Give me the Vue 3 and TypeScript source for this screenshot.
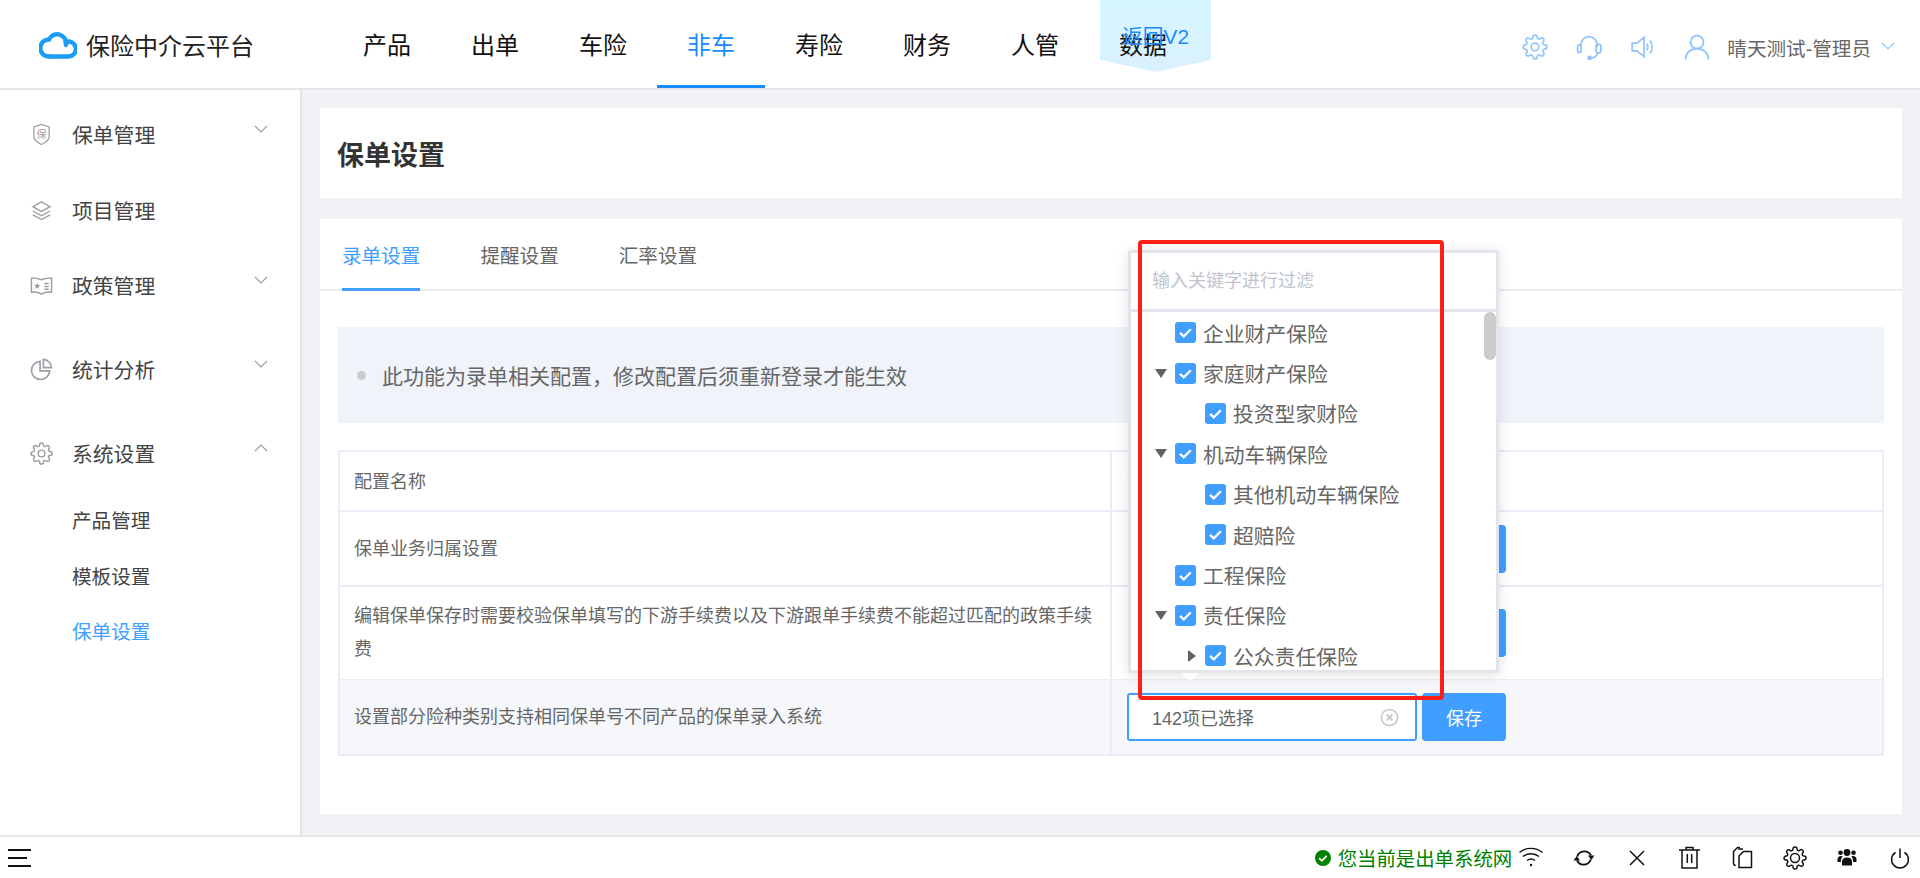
<script setup lang="ts">
interface TreeNode {
  label: string
  level: number
  arrow?: 'open' | 'closed'
}

const navItems = ['产品', '出单', '车险', '非车', '寿险', '财务', '人管', '数据']
const tabs = ['录单设置', '提醒设置', '汇率设置']
const subMenu = ['产品管理', '模板设置', '保单设置']

const treeNodes: TreeNode[] = [
  { label: '企业财产保险', level: 0 },
  { label: '家庭财产保险', level: 0, arrow: 'open' },
  { label: '投资型家财险', level: 1 },
  { label: '机动车辆保险', level: 0, arrow: 'open' },
  { label: '其他机动车辆保险', level: 1 },
  { label: '超赔险', level: 1 },
  { label: '工程保险', level: 0 },
  { label: '责任保险', level: 0, arrow: 'open' },
  { label: '公众责任保险', level: 1, arrow: 'closed' },
]

const gear =
  'M19.4 15a1.65 1.65 0 0 0 .33 1.82l.06.06a2 2 0 0 1 0 2.83 2 2 0 0 1-2.83 0l-.06-.06a1.65 1.65 0 0 0-1.82-.33 1.65 1.65 0 0 0-1 1.51V21a2 2 0 0 1-2 2 2 2 0 0 1-2-2v-.09A1.65 1.65 0 0 0 9 19.4a1.65 1.65 0 0 0-1.82.33l-.06.06a2 2 0 0 1-2.83 0 2 2 0 0 1 0-2.83l.06-.06a1.65 1.65 0 0 0 .33-1.82 1.65 1.65 0 0 0-1.51-1H3a2 2 0 0 1-2-2 2 2 0 0 1 2-2h.09A1.65 1.65 0 0 0 4.6 9a1.65 1.65 0 0 0-.33-1.82l-.06-.06a2 2 0 0 1 0-2.83 2 2 0 0 1 2.83 0l.06.06a1.65 1.65 0 0 0 1.82.33H9a1.65 1.65 0 0 0 1-1.51V3a2 2 0 0 1 2-2 2 2 0 0 1 2 2v.09a1.65 1.65 0 0 0 1 1.51 1.65 1.65 0 0 0 1.82-.33l.06-.06a2 2 0 0 1 2.83 0 2 2 0 0 1 0 2.83l-.06.06a1.65 1.65 0 0 0-.33 1.82V9a1.65 1.65 0 0 0 1.51 1H21a2 2 0 0 1 2 2 2 2 0 0 1-2 2h-.09a1.65 1.65 0 0 0-1.51 1z'
</script>

<template>
  <div class="page">
    <header class="topbar">
      <div class="logo">
        <svg class="cloud" viewBox="0 0 38 30" fill="none" stroke="#1a9cf7" stroke-width="4.4" stroke-linecap="round">
          <path d="M9.5 27.5H29.5a7.5 7.5 0 1 0-3-14.4" />
          <path d="M27 16A9 9 0 0 0 10 10.5A8.5 8.5 0 0 0 9.5 27.5" />
        </svg>
        <span>保险中介云平台</span>
      </div>
      <nav class="nav">
        <a v-for="item in navItems" :key="item" class="nav-item" :class="{ active: item === '非车' }">{{ item }}</a>
      </nav>
      <div class="top-right">
        <svg class="top-icon" viewBox="0 0 24 24" fill="none" stroke="#8fc4ff" stroke-width="1.5">
          <circle cx="12" cy="12" r="3.6" /><path :d="gear" />
        </svg>
        <svg class="top-icon" viewBox="0 0 24 24" fill="none" stroke="#8fc4ff" stroke-width="1.6">
          <path d="M4.5 12V10a7.5 7.5 0 0 1 15 0v2" />
          <rect x="1.5" y="10" width="3.2" height="7" rx="1.6" />
          <rect x="18.5" y="9.5" width="4.5" height="8" rx="2" />
          <path d="M20 17.5c-.5 2.8-3 4.5-6 4.8" />
          <circle cx="12.5" cy="22" r="1.4" fill="#8fc4ff" />
        </svg>
        <svg class="top-icon" viewBox="0 0 24 24" fill="none" stroke="#8fc4ff" stroke-width="1.6">
          <path d="M2 8.5h4.5L13 3v18l-6.500-5.500H2z" />
          <path d="M15.500 9c1.200 1.900 1.200 4.100 0 6M18.500 6c2.600 3.600 2.600 8.400 0 12" />
        </svg>
        <div class="user">
          <svg class="top-icon" viewBox="0 0 24 24" fill="none" stroke="#8fc4ff" stroke-width="1.7">
            <circle cx="12" cy="7.5" r="6" />
            <path d="M1.5 23.5c0-6 4.5-10 10.5-10s10.5 4 10.5 10" />
          </svg>
          <span class="user-name">晴天测试-管理员</span>
          <svg class="user-caret" viewBox="0 0 14 8" fill="none" stroke="#8fc4ff" stroke-width="1.2">
            <path d="M1 1l6 6 6-6" />
          </svg>
        </div>
      </div>
    </header>

    <!-- 悬浮的返回入口：底色压在导航下面，文字在导航上面 -->
    <div class="back-v2">
      <i class="back-bg"></i>
      <span class="back-text">返回V2</span>
    </div>

    <main class="main">
      <aside class="sidebar">
        <div class="menu-row">
          <svg class="menu-icon" viewBox="0 0 24 24" fill="none" stroke="#9a9da3" stroke-width="1.3">
            <path d="M12 1.5l8 2.5v10c0 4-4 6.5-8 8.5-4-2-8-4.500-8-8.500V4z" />
            <text x="12" y="15.5" font-size="10.5" text-anchor="middle" fill="#9a9da3" stroke="none">保</text>
          </svg>
          <span class="menu-label">保单管理</span>
          <svg class="menu-caret" viewBox="0 0 14 8" fill="none" stroke="#9a9da3" stroke-width="1.1"><path d="M1 1l6 6 6-6" /></svg>
        </div>
        <div class="menu-row">
          <svg class="menu-icon" viewBox="0 0 24 24" fill="none" stroke="#9a9da3" stroke-width="1.4">
            <path d="M12 3l9 5-9 5-9-5z" /><path d="M3 12.5l9 5 9-5" /><path d="M3 16.5l9 5 9-5" />
          </svg>
          <span class="menu-label">项目管理</span>
        </div>
        <div class="menu-row">
          <svg class="menu-icon" viewBox="0 0 24 24" fill="none" stroke="#9a9da3" stroke-width="1.5">
            <path d="M1.5 4.5c4-.5 7.5 0 10.5 1.500 3-1.500 6.500-2 10.500-1.500v14.500c-4-.5-7.500 0-10.500 2-3-2-6.500-2.500-10.500-2z" />
            <path d="M15 10h4.5M15 13h4.5M15 16h4.5" />
            <path d="M7.5 9l1 2.5h2.5l-2 1.600.7 2.600-2.200-1.500-2.200 1.500.7-2.600-2-1.600h2.500z" fill="#9a9da3" stroke="none" />
          </svg>
          <span class="menu-label">政策管理</span>
          <svg class="menu-caret" viewBox="0 0 14 8" fill="none" stroke="#9a9da3" stroke-width="1.1"><path d="M1 1l6 6 6-6" /></svg>
        </div>
        <div class="menu-row">
          <svg class="menu-icon" viewBox="0 0 24 24" fill="none" stroke="#9a9da3" stroke-width="1.7">
            <path d="M10.5 3.5a9.5 9.5 0 1 0 10 10h-10z" />
            <path d="M14 1.5a9 9 0 0 1 8.5 8.5H14z" />
          </svg>
          <span class="menu-label">统计分析</span>
          <svg class="menu-caret" viewBox="0 0 14 8" fill="none" stroke="#9a9da3" stroke-width="1.1"><path d="M1 1l6 6 6-6" /></svg>
        </div>
        <div class="menu-row">
          <svg class="menu-icon" viewBox="0 0 24 24" fill="none" stroke="#9a9da3" stroke-width="1.5">
            <circle cx="12" cy="12" r="3.5" /><path :d="gear" />
          </svg>
          <span class="menu-label">系统设置</span>
          <svg class="menu-caret" viewBox="0 0 14 8" fill="none" stroke="#9a9da3" stroke-width="1.1"><path d="M1 7l6-6 6 6" /></svg>
        </div>
        <ul class="submenu">
          <li v-for="item in subMenu" :key="item" :class="{ current: item === '保单设置' }">{{ item }}</li>
        </ul>
      </aside>

      <section class="content">
        <div class="title-card"><h1>保单设置</h1></div>
        <div class="panel">
          <div class="tabs">
            <span v-for="tab in tabs" :key="tab" class="tab" :class="{ active: tab === '录单设置' }">{{ tab }}</span>
          </div>
          <div class="notice">
            <i class="dot"></i>
            <span>此功能为录单相关配置，修改配置后须重新登录才能生效</span>
          </div>
          <div class="table">
            <div class="row head">
              <div class="cell name">配置名称</div>
              <div class="cell value">配置</div>
            </div>
            <div class="row r1">
              <div class="cell name">保单业务归属设置</div>
              <div class="cell value"><div class="fake-input"></div><button class="save">保存</button></div>
            </div>
            <div class="row r2">
              <div class="cell name">编辑保单保存时需要校验保单填写的下游手续费以及下游跟单手续费不能超过匹配的政策手续费</div>
              <div class="cell value"><div class="fake-input"></div><button class="save">保存</button></div>
            </div>
            <div class="row r3">
              <div class="cell name">设置部分险种类别支持相同保单号不同产品的保单录入系统</div>
              <div class="cell value">
                <div class="fake-input focus">
                  <span>142项已选择</span>
                  <svg class="clear" viewBox="0 0 20 20" fill="none" stroke="#c0c4cc" stroke-width="1.5">
                    <circle cx="10" cy="10" r="8.5" /><path d="M7 7l6 6M13 7l-6 6" stroke-width="1.8" />
                  </svg>
                </div>
                <button class="save">保存</button>
              </div>
            </div>
          </div>
        </div>
      </section>
    </main>

    <footer class="statusbar">
      <div class="burger"><i></i><i class="short"></i><i></i></div>
      <div class="status-right">
        <svg class="ok" viewBox="0 0 16 16">
          <circle cx="8" cy="8" r="8" fill="#008000" />
          <path d="M4.2 8.2l2.6 2.6 4.9-5" fill="none" stroke="#fff" stroke-width="1.8" />
        </svg>
        <span class="status-text">您当前是出单系统网</span>
        <svg class="bar-icon wifi" viewBox="0 0 24 24" fill="none" stroke="#111" stroke-width="1.4">
          <path d="M.5 6.5c6.500-5.500 16.500-5.500 23 0" /><path d="M4 10.500c4.500-3.700 11.500-3.700 16 0" /><path d="M8 14.500c2.500-1.800 5.500-1.800 8 0" />
          <circle cx="12" cy="19" r="1.2" fill="#111" stroke="none" />
        </svg>
        <svg class="bar-icon" viewBox="0 0 24 24" fill="none" stroke="#111" stroke-width="1.8">
          <path d="M5.2 10.5a7.5 7.5 0 0 1 13.8-1" /><path d="M18.8 13.5a7.5 7.5 0 0 1-13.800 1" />
          <path d="M16 9.5h6.5l-3.200 4.500z" fill="#111" stroke="none" /><path d="M1.5 14.5H8l-3.200-4.500z" fill="#111" stroke="none" />
        </svg>
        <svg class="bar-icon" viewBox="0 0 24 24" fill="none" stroke="#111" stroke-width="1.5"><path d="M5 5l14 14M19 5L5 19" /></svg>
        <svg class="bar-icon" viewBox="0 0 24 24" fill="none" stroke="#111" stroke-width="1.5">
          <path d="M2 4h21M9 4V1.5h7V4" /><path d="M5 4v18h15V4" /><path d="M10.300 8v9M14.700 8v9" />
        </svg>
        <svg class="bar-icon" viewBox="0 0 24 24" fill="none" stroke="#111" stroke-width="1.5">
          <path d="M10 1.5H7.5L3.5 5.5V17c0 1.500.8 2.300 2.200 2.500" /><path d="M8 3h5" />
          <path d="M9 10l4.500-4.500h8v16H9z" />
        </svg>
        <svg class="bar-icon" viewBox="0 0 24 24" fill="none" stroke="#111" stroke-width="1.5">
          <circle cx="12" cy="12" r="4.5" /><path :d="gear" />
        </svg>
        <svg class="bar-icon" viewBox="0 0 24 24" fill="#111">
          <circle cx="12" cy="6.5" r="3.4" /><circle cx="5.5" cy="6.8" r="2.3" /><circle cx="18.5" cy="6.8" r="2.3" />
          <path d="M7 19.500v-4c0-2.500 2-4 5-4s5 1.500 5 4v4z" />
          <path d="M2.500 16v-2.500c0-2 1.300-3.500 3.500-3.500.8 0 1.300.2 1.800.5-1.300 1.200-2 2.700-2 5.500zM21.500 16v-2.500c0-2-1.300-3.500-3.500-3.500-.8 0-1.300.2-1.800.5 1.300 1.200 2 2.700 2 5.500z" />
        </svg>
        <svg class="bar-icon" viewBox="0 0 24 24" fill="none" stroke="#111" stroke-width="1.5">
          <path d="M12 2.5v9.500" /><path d="M7.500 6.500a8.400 8.400 0 1 0 9 0" />
        </svg>
      </div>
    </footer>

    <!-- 下拉树弹层 -->
    <div class="dropdown">
      <div class="search">输入关键字进行过滤</div>
      <div class="tree">
        <div
          v-for="node in treeNodes"
          :key="node.label"
          class="tree-row"
          :style="{ paddingLeft: `${17 + node.level * 30}px` }"
        >
          <span class="arrow-slot">
            <i v-if="node.arrow === 'open'" class="arrow-open"></i>
            <i v-else-if="node.arrow === 'closed'" class="arrow-closed"></i>
          </span>
          <svg class="check" viewBox="0 0 21 21">
            <rect width="21" height="21" rx="3" fill="#409eff" />
            <path d="M5 10.8l3.800 3.500 7-7" fill="none" stroke="#fff" stroke-width="2.3" />
          </svg>
          <span class="tree-label">{{ node.label }}</span>
        </div>
        <div class="thumb"></div>
      </div>
      <i class="pointer"></i>
    </div>

    <!-- 截图上的红色标注框 -->
    <div class="red-mark"></div>
  </div>
</template>

<style>
html,
body {
  margin: 0;
  background: #f0f2f5;
}
</style>

<style scoped>
.page {
  position: relative;
  display: flex;
  flex-direction: column;
  width: 1920px;
  height: 878px;
  overflow: hidden;
  background: #f0f2f5;
  font-family: "Liberation Sans", "Noto Sans CJK SC", sans-serif;
  color: #606266;
}

.topbar {
  display: flex;
  align-items: stretch;
  flex: none;
  height: 90px;
  box-sizing: border-box;
  background: #fff;
  border-bottom: 2px solid #e4e5e7;
}

.logo {
  display: flex;
  align-items: center;
  gap: 9px;
  width: 333px;
  box-sizing: border-box;
  padding-left: 39px;
  font-size: 24px;
  color: #222;
}

.cloud {
  width: 38px;
  height: 30px;
}

.nav {
  position: relative;
  z-index: 1;
  display: flex;
}

.nav-item {
  display: flex;
  align-items: center;
  box-sizing: border-box;
  width: 108px;
  height: 88px;
  padding-left: 30px;
  padding-top: 2px;
  font-size: 24px;
  color: #111;
  border-bottom: 3px solid transparent;
}

.nav-item.active {
  color: #1a8cff;
  border-bottom-color: #1a8cff;
}

.top-right {
  display: flex;
  align-items: center;
  gap: 28px;
  margin-left: auto;
  padding: 6px 25px 0 0;
}

.top-icon {
  width: 26px;
  height: 26px;
}

.user {
  display: flex;
  align-items: center;
  gap: 17px;
}

.user-name {
  font-size: 19.6px;
  color: #666;
}

.user-caret {
  width: 14px;
  height: 8px;
  margin-left: -7px;
  margin-bottom: 3px;
}

.back-v2 {
  position: absolute;
  left: 1100px;
  top: 0;
  width: 111px;
  height: 72px;
  text-align: center;
}

.back-bg {
  position: absolute;
  inset: 0;
  z-index: 0;
  background: linear-gradient(#d6f6ff, #daf1ff);
  clip-path: polygon(0 0, 100% 0, 100% 60px, 50% 100%, 0 60px);
}

.back-text {
  position: relative;
  z-index: 2;
  font-size: 20.8px;
  line-height: 73px;
  color: #1a8cff;
}

.main {
  display: flex;
  flex: 1;
  min-height: 0;
}

.sidebar {
  flex: none;
  width: 302px;
  box-sizing: border-box;
  padding-top: 19px;
  background: #fff;
  border-right: 2px solid #e4e5e7;
}

.menu-row {
  display: flex;
  align-items: center;
  height: 50px;
  padding-left: 30px;
}

.menu-row:nth-child(2) {
  margin-top: 26px;
}

.menu-row:nth-child(3) {
  margin-top: 25px;
}

.menu-row:nth-child(4),
.menu-row:nth-child(5) {
  margin-top: 34px;
}

.menu-icon {
  flex: none;
  width: 23px;
  height: 23px;
}

.menu-label {
  margin-left: 19px;
  font-size: 20.8px;
  color: #444;
}

.menu-caret {
  width: 14px;
  height: 8px;
  margin-left: 99px;
  margin-bottom: 10px;
}

.submenu {
  list-style: none;
  margin: 16px 0 0;
  padding: 0 0 0 72px;
  font-size: 19.6px;
  color: #444;
}

.submenu li {
  height: 55.5px;
  line-height: 55.5px;
}

.submenu li.current {
  color: #409eff;
}

.content {
  display: flex;
  flex-direction: column;
  flex: 1;
  gap: 21px;
  padding: 18px 18px 21px;
  min-width: 0;
}

.title-card {
  display: flex;
  align-items: center;
  flex: none;
  height: 90px;
  padding-left: 17px;
  background: #fff;
}

.title-card h1 {
  margin: 0;
  font-size: 27px;
  font-weight: 700;
  color: #333;
}

.panel {
  flex: 1;
  padding: 0 18px;
  background: #fff;
}

.tabs {
  display: flex;
  gap: 60px;
  height: 72px;
  box-sizing: border-box;
  margin: 0 -18px;
  padding-left: 22px;
  border-bottom: 2px solid #e9edf4;
}

.tab {
  height: 72px;
  box-sizing: border-box;
  font-size: 19.6px;
  line-height: 74px;
  color: #666;
}

.tab.active {
  color: #409eff;
  border-bottom: 3px solid #409eff;
}

.notice {
  display: flex;
  align-items: center;
  height: 96px;
  margin-top: 36px;
  padding-left: 19px;
  background: #f0f3f9;
  font-size: 21px;
  color: #666;
}

.dot {
  width: 9px;
  height: 9px;
  margin-right: 16px;
  border-radius: 50%;
  background: #ccc;
}

.table {
  margin-top: 27px;
  border: 2px solid #eaedf5;
  border-bottom: 0;
  font-size: 18px;
  color: #666;
}

.row {
  display: flex;
  box-sizing: content-box;
  border-bottom: 2px solid #eaedf5;
}

.row.head {
  height: 58px;
}

.row.r1 {
  height: 73px;
}

.row.r2 {
  height: 92px;
  border-bottom-width: 1px;
}

.row.r3 {
  height: 74px;
  background: #f5f7fb;
}

.cell {
  display: flex;
  align-items: center;
}

.cell.name {
  flex: none;
  width: 772px;
  box-sizing: border-box;
  padding: 0 14px;
  line-height: 33px;
  border-right: 2px solid #eaedf5;
}

.row.head .cell.name,
.row.r1 .cell.name {
  padding-top: 2px;
}

.cell.value {
  flex: 1;
  gap: 5px;
  padding-left: 15px;
}

.fake-input {
  display: flex;
  align-items: center;
  flex: none;
  box-sizing: border-box;
  width: 290px;
  height: 48px;
  padding: 0 16px 0 23px;
}

.fake-input.focus {
  justify-content: space-between;
  background: #fff;
  border: 2px solid #409eff;
  border-radius: 3px;
}

.clear {
  width: 19px;
  height: 19px;
}

.save {
  width: 84px;
  height: 48px;
  padding: 0;
  border: 0;
  border-radius: 4px;
  background: #409eff;
  color: #fff;
  font: inherit;
}

.statusbar {
  display: flex;
  align-items: center;
  flex: none;
  height: 43px;
  box-sizing: border-box;
  background: #fff;
  border-top: 2px solid #e5e5e5;
}

.burger {
  display: flex;
  flex-direction: column;
  gap: 6px;
  margin-left: 8px;
  width: 23px;
}

.burger i {
  display: block;
  height: 2px;
  background: #111;
}

.burger i.short {
  width: 19px;
}

.status-right {
  display: flex;
  align-items: center;
  margin-left: auto;
  padding-right: 8px;
}

.ok {
  width: 16px;
  height: 16px;
  margin-right: 7px;
}

.status-text {
  font-size: 19.4px;
  color: #008000;
  margin-right: 7px;
}

.bar-icon {
  width: 24px;
  height: 24px;
  margin-left: 28.7px;
}

.bar-icon.wifi {
  margin-left: 0;
}

.dropdown {
  position: absolute;
  left: 1128px;
  top: 250px;
  width: 371px;
  height: 423px;
  box-sizing: border-box;
  background: #fff;
  border: 3px solid #e2e6ec;
  border-radius: 3px;
  box-shadow: 0 2px 14px rgba(0, 0, 0, 0.12);
}

.search {
  box-sizing: border-box;
  height: 59px;
  padding-left: 21px;
  font-size: 18px;
  line-height: 56px;
  color: #c0c4cc;
  border-bottom: 3px solid #e2e6ec;
}

.tree {
  position: relative;
  box-sizing: border-box;
  height: 358px;
  padding-top: 0.5px;
  overflow: hidden;
}

.tree-row {
  display: flex;
  align-items: center;
  height: 40.4px;
}

.arrow-slot {
  display: flex;
  align-items: center;
  justify-content: center;
  flex: none;
  width: 27px;
}

.arrow-open {
  width: 0;
  height: 0;
  margin-right: 2px;
  border-left: 6.5px solid transparent;
  border-right: 6.5px solid transparent;
  border-top: 9px solid #606266;
}

.arrow-closed {
  width: 0;
  height: 0;
  border-top: 6.5px solid transparent;
  border-bottom: 6.5px solid transparent;
  border-left: 8px solid #606266;
}

.check {
  flex: none;
  width: 21px;
  height: 21px;
}

.tree-label {
  margin-left: 7px;
  font-size: 20.8px;
  color: #666;
}

.thumb {
  position: absolute;
  right: 0;
  top: 0;
  width: 12px;
  height: 48px;
  border-radius: 6px;
  background: #ccc;
}

.pointer {
  position: absolute;
  left: 50px;
  top: 420px;
  width: 0;
  height: 0;
  border-left: 9px solid transparent;
  border-right: 9px solid transparent;
  border-top: 8px solid #fff;
}

.red-mark {
  position: absolute;
  left: 1138px;
  top: 240px;
  width: 306px;
  height: 460px;
  box-sizing: border-box;
  border: 4px solid #ff2015;
  border-radius: 4px;
  pointer-events: none;
}
</style>
